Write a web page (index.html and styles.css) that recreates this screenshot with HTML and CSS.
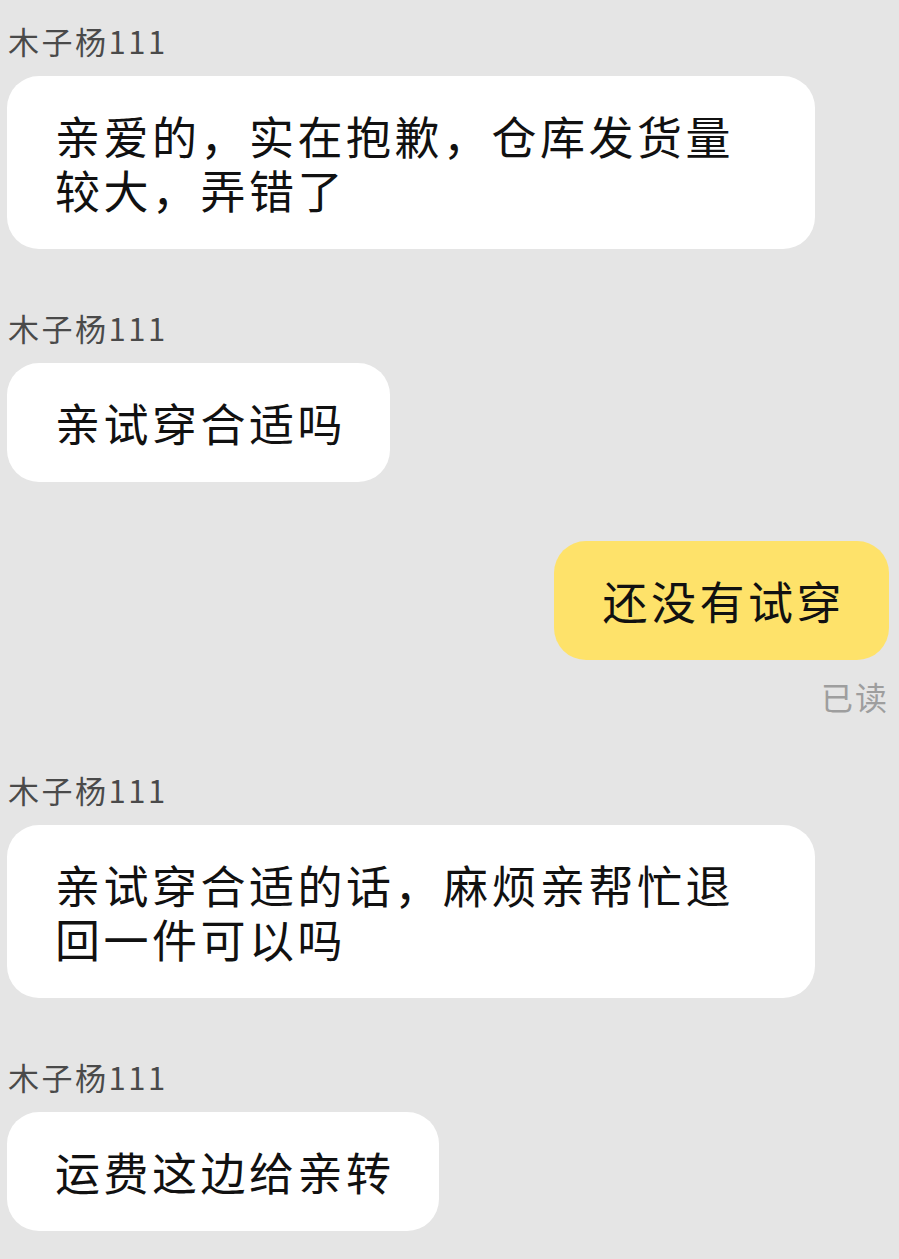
FILE: index.html
```html
<!DOCTYPE html>
<html lang="zh-CN">
<head>
<meta charset="utf-8">
<title>聊天</title>
<link rel="stylesheet" href="styles.css">
</head>
<body>
<div class="chat">
  <div class="msg msg-left">
    <div class="name">木子杨111</div>
    <div class="bubble">亲爱的，实在抱歉，仓库发货量较大，弄错了</div>
  </div>
  <div class="msg msg-left">
    <div class="name">木子杨111</div>
    <div class="bubble">亲试穿合适吗</div>
  </div>
  <div class="msg msg-right">
    <div class="bubble bubble-mine">还没有试穿</div>
    <div class="read">已读</div>
  </div>
  <div class="msg msg-left">
    <div class="name">木子杨111</div>
    <div class="bubble">亲试穿合适的话，麻烦亲帮忙退回一件可以吗</div>
  </div>
  <div class="msg msg-left">
    <div class="name">木子杨111</div>
    <div class="bubble">运费这边给亲转</div>
  </div>
</div>
</body>
</html>
```
FILE: styles.css
```css
html, body {
  margin: 0;
  padding: 0;
  background: #e5e5e5;
}
body {
  font-family: "Noto Sans CJK SC", "Noto Sans", sans-serif;
  color: #111;
}
.chat {
  display: flex;
  flex-direction: column;
  gap: 59px;
  padding: 21px 10px 0 7px;
}
.msg {
  display: flex;
  flex-direction: column;
  gap: 15px;
}
.msg-left {
  align-items: flex-start;
}
.msg-right {
  align-items: flex-end;
  gap: 18px;
  margin-bottom: -3px;
}
.name {
  font-size: 31px;
  line-height: 40px;
  letter-spacing: 2.5px;
  color: #4a4a4a;
  padding-left: 1px;
}
.bubble {
  box-sizing: border-box;
  max-width: 808px;
  background: #ffffff;
  border-radius: 32px;
  padding: 33px 44px 32px 48px;
  font-size: 45px;
  font-weight: 400;
  letter-spacing: 3.5px;
  line-height: 54px;
  color: #111;
}
.bubble-mine {
  background: #fee26a;
}
.read {
  font-size: 32px;
  line-height: 36px;
  letter-spacing: 2px;
  color: #9e9e9e;
}
```
